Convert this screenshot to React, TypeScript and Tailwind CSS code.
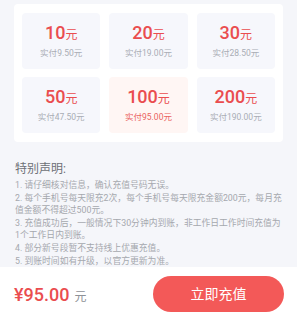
import React, { useState } from "react";

const options = [
  { value: 10, pay: "9.50" },
  { value: 20, pay: "19.00" },
  { value: 30, pay: "28.50" },
  { value: 50, pay: "47.50" },
  { value: 100, pay: "95.00" },
  { value: 200, pay: "190.00" },
];

const notes = [
  "1. 请仔细核对信息，确认充值号码无误。",
  "2. 每个手机号每天限充2次，每个手机号每天限充金额200元，每月充值金额不得超过500元。",
  "3. 充值成功后，一般情况下30分钟内到账，非工作日工作时间充值为1个工作日内到账。",
  "4. 部分新号段暂不支持线上优惠充值。",
  "5. 到账时间如有升级，以官方更新为准。",
];

export default function App() {
  const [selected, setSelected] = useState(4);
  const current = options[selected];

  return (
    <div
      className="h-[321px] w-[297px] flex flex-col bg-[#f5f6fa] overflow-hidden"
      style={{ fontFamily: "Roboto, 'Noto Sans CJK SC', sans-serif" }}
    >
      <div className="flex-1 overflow-hidden px-[14px] pt-[4px]">
        {/* Amount grid */}
        <div className="bg-white rounded-[4px] px-[8px] py-[9px] grid grid-cols-3 gap-x-[9px] gap-y-[8px]">
          {options.map((o, i) => {
            const active = i === selected;
            return (
              <button
                key={o.value}
                onClick={() => setSelected(i)}
                className={`h-[56px] rounded-[4px] flex flex-col items-center justify-center ${
                  active ? "bg-[#fff6f4]" : "bg-[#f6f7fc]"
                }`}
              >
                <div className="text-[#ea4d4f] leading-[20px] flex items-baseline">
                  <span className="text-[18px] font-medium">{o.value}</span>
                  <span className="text-[12px]">元</span>
                </div>
                <div
                  className={`text-[8.5px] leading-[12px] mt-[2px] ${
                    active ? "text-[#ea6260]" : "text-[#a9adb5]"
                  }`}
                >
                  实付{o.pay}元
                </div>
              </button>
            );
          })}
        </div>

        {/* Notes */}
        <div className="mt-[19px] pl-[1px]">
          <h2 className="text-[12px] leading-[16px] text-[#6d7076]">特别声明:</h2>
          <div className="mt-[2px] pr-[1px]">
            {notes.map((n) => (
              <p key={n} className="text-[8.8px] leading-[12.6px] text-[#a5a8ae]">
                {n}
              </p>
            ))}
          </div>
        </div>
      </div>

      {/* Bottom bar */}
      <div className="h-[54px] bg-white flex items-center justify-between pl-[14px] pr-[13px]">
        <div className="flex items-baseline">
          <span className="text-[18px] font-medium text-[#ea4d4f]">¥{current.pay}</span>
          <span className="text-[12px] text-[#8e9197] ml-[5px]">元</span>
        </div>
        <button className="w-[131px] h-[36px] rounded-full bg-[#f35958] text-white text-[14px]">
          立即充值
        </button>
      </div>
    </div>
  );
}
